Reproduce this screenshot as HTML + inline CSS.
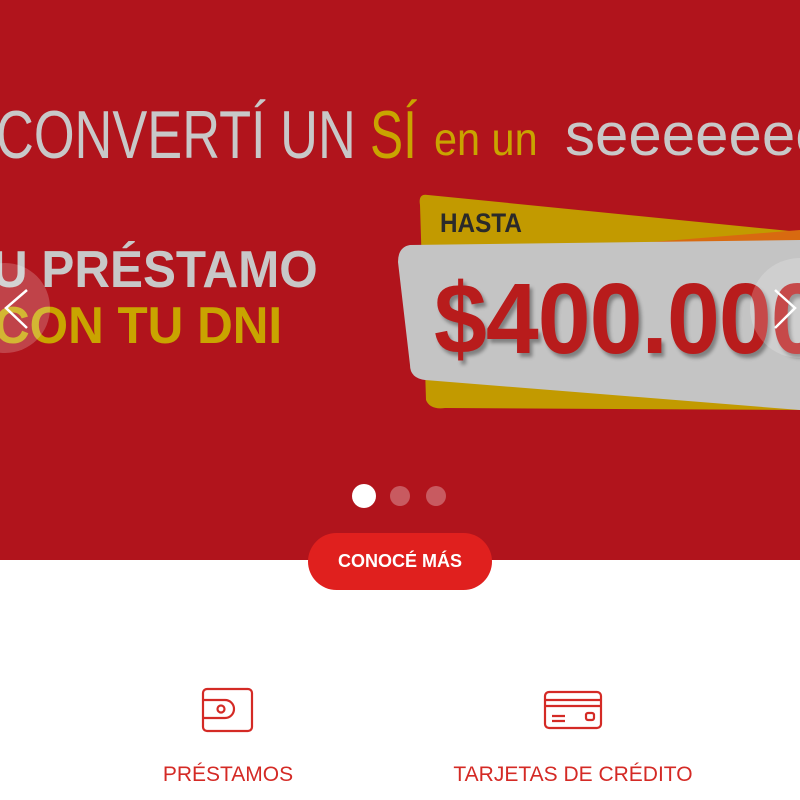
<!DOCTYPE html>
<html><head><meta charset="utf-8"><style>
*{margin:0;padding:0;box-sizing:border-box}
body{width:800px;height:800px;background:#fff;position:relative;overflow:hidden;font-family:"Liberation Sans",sans-serif}
.ban{position:absolute;left:0;top:0;width:800px;height:560px;background:#b1141c;overflow:hidden}
.t{position:absolute;white-space:nowrap}
.h{position:absolute;white-space:nowrap;color:#c8c8c8;font-size:68px;transform-origin:left top}
.btn{position:absolute;left:308px;top:533px;width:184px;height:57px;border-radius:29px;background:#e0201e;color:#fff;font-weight:bold;font-size:18px;text-align:center;line-height:57px}
.lbl{position:absolute;top:763px;color:#d42a25;font-size:21px;text-align:center}
</style></head><body>
<div class="ban">
<div class="h" style="left:-4px;top:96px;transform:scaleX(.77)">CONVERTÍ UN</div>
<div class="h" style="left:370px;top:96px;color:#c9a400;transform:scaleX(.73)">SÍ</div>
<div class="h" style="left:434px;top:112px;color:#c9a400;font-size:46px;transform:scaleX(.9)">en un</div>
<div class="h" style="left:565px;top:100px;font-size:60px">seeeeeee</div>
<div class="t" style="left:-8px;top:240px;font-size:52px;font-weight:bold;color:#c8c8c8;transform:scaleX(.95);transform-origin:left">U PRÉSTAMO</div>
<div class="t" style="left:-6px;top:296px;font-size:52px;font-weight:bold;color:#c9a400;transform:scaleX(.95);transform-origin:left">CON TU DNI</div>
<svg style="position:absolute;left:0;top:0" width="800" height="560">
<path d="M428 195 Q418 193 420 205 L426 400 Q430 410 445 408 L800 410 L800 232 Z" fill="#c29a00"/>
<path d="M430 260 L800 230 L800 250 Z" fill="#d86a10"/>
<path d="M410 245 L800 240 L800 410 L425 380 Q410 378 410 365 L398 262 Q398 247 410 245Z" fill="#c4c4c4"/>
</svg>
<div class="t" style="left:440px;top:208px;font-size:27px;font-weight:bold;color:#2a2a2a;transform:scaleX(.9);transform-origin:left">HASTA</div>
<div class="t" style="left:434px;top:262px;font-size:100px;font-weight:bold;color:#b81c1c;letter-spacing:-1px;transform:scaleX(.95);transform-origin:left;text-shadow:3px 4px 4px rgba(0,0,0,.35)">$400.000</div>
<svg style="position:absolute;left:0;top:0" width="800" height="560">
<circle cx="5" cy="308" r="45" fill="rgba(255,255,255,.2)"/>
<circle cx="800" cy="308" r="50" fill="rgba(255,255,255,.2)"/>
<path d="M27 290 L6 308 L27 328" stroke="#fff" stroke-width="2.5" fill="none"/>
<path d="M775 290 L795 308 L775 328" stroke="#fff" stroke-width="2.5" fill="none"/>
<circle cx="364" cy="496" r="12" fill="#fff"/>
<circle cx="400" cy="496" r="10" fill="rgba(255,255,255,.3)"/>
<circle cx="436" cy="496" r="10" fill="rgba(255,255,255,.3)"/>
</svg>
</div>
<div class="btn">CONOCÉ MÁS</div>
<svg style="position:absolute;left:0;top:0" width="800" height="800" fill="none" stroke="#d42a25" stroke-width="2.2">
<rect x="203" y="689" width="49" height="42" rx="4"/>
<path d="M203 700 H225 A8 8 0 0 1 225 718 H203"/>
<circle cx="221" cy="709" r="3.5"/>
<rect x="545" y="692" width="56" height="36" rx="4"/>
<path d="M545 700 H601 M545 706 H601 M552 716 H565 M552 721 H565"/>
<rect x="586" y="713" width="8" height="7" rx="2"/>
</svg>
<div class="lbl" style="left:128px;width:200px">PRÉSTAMOS</div>
<div class="lbl" style="left:433px;width:280px">TARJETAS DE CRÉDITO</div>
</body></html>
